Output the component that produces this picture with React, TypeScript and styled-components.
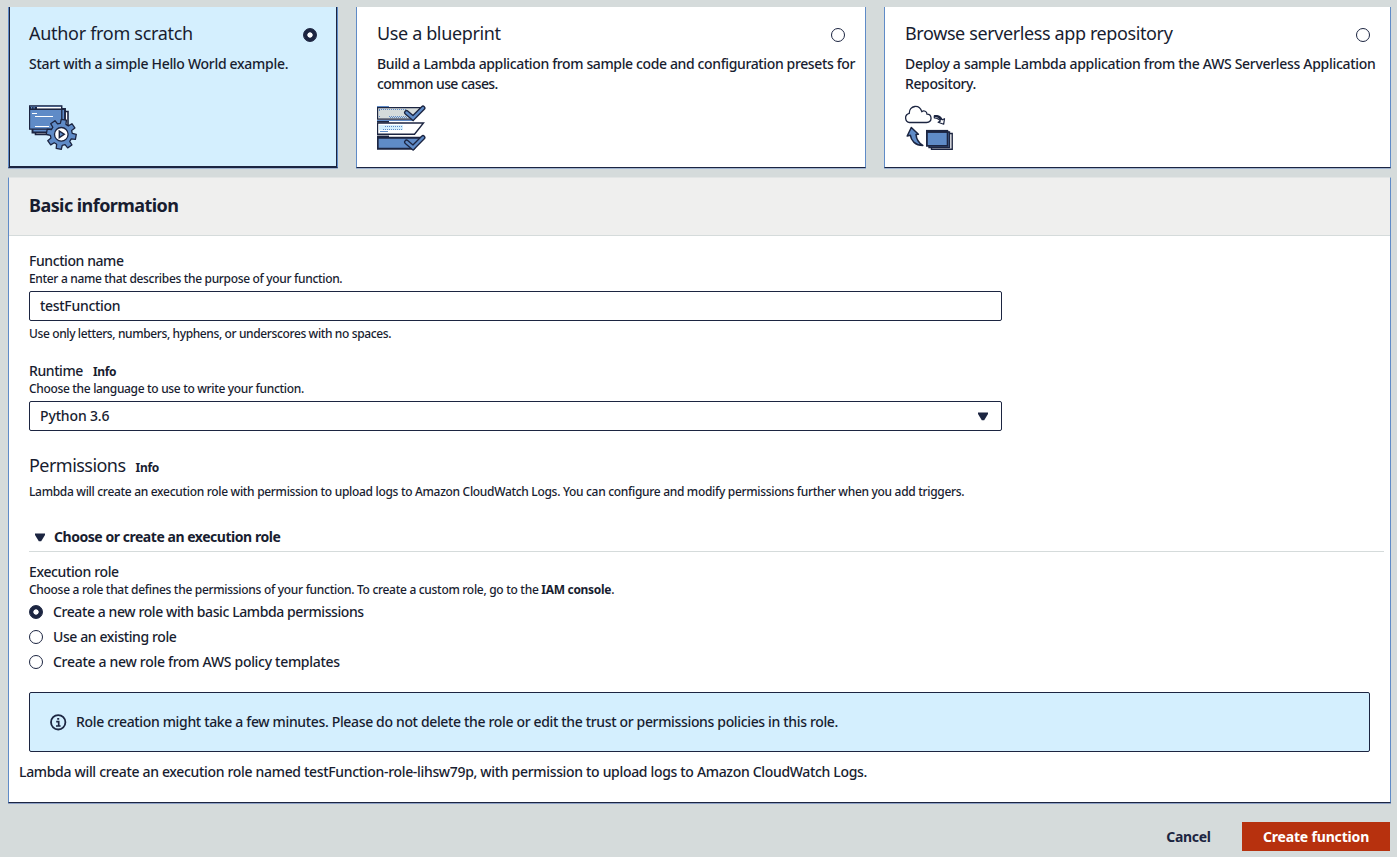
import React from "react";
import styled, { createGlobalStyle, css } from "styled-components";

const ink = "#1c2541";
const blue = "#5f8bc7";
const ice = "#d4effe";
const page = "#d5dbdb";

const GlobalStyle = createGlobalStyle`
  *, *::before, *::after { box-sizing: border-box; }
  body {
    margin: 0;
    background: ${page};
    color: #181d30;
    font-family: "Noto Sans", "Open Sans", sans-serif;
    font-size: 14px;
    line-height: 20px;
  }
  #root { height: 857px; overflow: hidden; }
`;

type TextProps = { $ls?: number };
const tracking = css<TextProps>`
  letter-spacing: ${(p) => p.$ls ?? -0.3}px;
  white-space: nowrap;
`;

const Page = styled.main`
  padding: 7px 6px 0 8px;
  height: 857px;
`;

const Cards = styled.section`
  display: grid;
  grid-template-columns: 330px 510px 507px;
  column-gap: 18px;
  height: 161px;
`;

const Card = styled.label<{ $selected?: boolean }>`
  display: flex;
  flex-direction: column;
  padding: 15px 20px 0;
  background: ${(p) => (p.$selected ? ice : "#fff")};
  border: 1px solid ${blue};
  border-top: 0;
  border-bottom-color: ${ink};
  box-shadow: ${(p) =>
    p.$selected
      ? `inset 1px 0 ${ink}, inset -1px 0 ${ink}, inset 0 -1px ${ink}, 0 1px #9fb2cf`
      : "0 1px #9fb2cf"};
`;

const CardHead = styled.div`
  display: flex;
  justify-content: space-between;
  align-items: flex-start;
  height: 22px;
`;

const CardTitle = styled.span<TextProps>`
  ${tracking}
  font-size: 18px;
  line-height: 22px;
`;

const CardText = styled.div`
  height: 40px;
  margin: 10px 0 11px;
`;

const Line = styled.span<TextProps>`
  ${tracking}
  display: block;
  font-weight: 500;
`;

const Radio = styled.span<{ $on?: boolean }>`
  flex: none;
  width: 14px;
  height: 14px;
  border-radius: 50%;
  border: 1px solid ${ink};
  background: ${(p) => (p.$on ? `radial-gradient(circle, #fff 2.3px, ${ink} 3px)` : "#fff")};
`;

const CardRadio = styled(Radio)`
  margin-top: 6px;
`;

const Panel = styled.section`
  margin-top: 9px;
  height: 626px;
  background: #fff;
  border: 1px solid ${blue};
  border-top-color: #e2e5e5;
  border-bottom-color: ${ink};
  box-shadow: 0 1px #8c9fc4;
`;

const PanelHead = styled.header`
  display: flex;
  align-items: center;
  height: 58px;
  padding: 0 0 3px 20px;
  background: #efefee;
  border-bottom: 1px solid ${page};
`;

const PanelTitle = styled.h2<TextProps>`
  ${tracking}
  margin: 0;
  font-size: 18px;
  line-height: 24px;
  font-weight: 700;
`;

const Body = styled.div`
  display: flex;
  flex-direction: column;
  padding: 16px 20px 0;
`;

const Field = styled.div`
  width: 973px;
  margin-bottom: 19px;
`;

const LabelRow = styled.div<{ $tall?: boolean }>`
  display: flex;
  align-items: baseline;
  gap: 10px;
  height: ${(p) => (p.$tall ? 23 : 18)}px;
  line-height: ${(p) => (p.$tall ? 22 : 18)}px;
`;

const Label = styled.span<TextProps>`
  ${tracking}
  font-weight: 500;
`;

const Heading = styled.span<TextProps>`
  ${tracking}
  font-size: 18px;
`;

const Info = styled.a<TextProps>`
  ${tracking}
  font-size: 12px;
  font-weight: 700;
`;

const Hint = styled.div<TextProps>`
  ${tracking}
  font-size: 12px;
  line-height: 18px;
  font-weight: 500;
`;

const Control = styled.div<TextProps>`
  ${tracking}
  display: flex;
  align-items: center;
  justify-content: space-between;
  height: 30px;
  margin: 3px 0 4px;
  padding: 0 12px 0 10px;
  font-weight: 500;
  border: 1px solid ${ink};
  border-radius: 2px;
`;

const Permissions = styled.div`
  margin-bottom: 26px;
  ${Hint} { margin-top: 6px; }
`;

const Expander = styled.div`
  display: flex;
  align-items: center;
  gap: 8px;
  height: 25px;
  margin: 0 -14px 11px 0;
  padding: 0 0 4px 5px;
  border-bottom: 1px solid ${page};
`;

const ExpanderTitle = styled.span<TextProps>`
  ${tracking}
  font-weight: 700;
`;

const Option = styled.label`
  display: flex;
  align-items: center;
  gap: 10px;
  height: 25px;
`;

const Alert = styled.div`
  display: flex;
  align-items: center;
  gap: 9px;
  height: 60px;
  margin: 18px 0 10px;
  padding-left: 20px;
  background: ${ice};
  border: 1px solid ${ink};
  border-radius: 2px;
`;

const Outcome = styled.div`
  margin-left: -10px;
`;

const Footer = styled.footer`
  display: flex;
  justify-content: flex-end;
  align-items: center;
  margin-top: 19px;
  padding-right: 1px;
`;

const Button = styled.button<{ $primary?: boolean } & TextProps>`
  width: ${(p) => (p.$primary ? 148 : 107)}px;
  height: 29px;
  padding: 0;
  border: 0;
  font: 700 14px/20px "Noto Sans", sans-serif;
  color: ${(p) => (p.$primary ? "#fff" : ink)};
  background: ${(p) => (p.$primary ? "#b7310e" : "transparent")};
  ${tracking}
`;

const Caret = () => (
  <svg width="12" height="9" viewBox="0 0 12 9">
    <path d="M1 .5h10v1.5L7.2 8.2H4.8L1 2z" fill={ink} />
  </svg>
);

const InfoIcon = () => (
  <svg width="17" height="17" viewBox="0 0 17 17" fill="none" stroke={ink}>
    <circle cx="8.2" cy="8.3" r="7.2" strokeWidth="1.8" />
    <path d="M7.2 4.8h2M6.2 7.6h2.500v4M6 12h4.600" strokeWidth="1.7" />
  </svg>
);

const teeth = 8;
const gearPath =
  Array.from({ length: teeth }, (_, i) => {
    const base = ((i * 360) / teeth - 80) * (Math.PI / 180);
    const at = (r: number, deg: number) => {
      const a = base + (deg * Math.PI) / 180;
      return `${(32.3 + r * Math.cos(a)).toFixed(2)} ${(29.3 + r * Math.sin(a)).toFixed(2)}`;
    };
    return `${i ? "L" : "M"}${at(11, -15)}L${at(15, -10)}L${at(15, 10)}L${at(11, 15)}`;
  }).join("") + "Z";

const ScratchIcon = () => (
  <svg width="49" height="47" viewBox="0 0 49 47" fill="none" stroke={ink}>
    <path d="M6.5 6.5h32.500v23h-32.500z" fill="#fff" strokeWidth="1.6" />
    <path d="M3.500 4h32.500v23.500h-32.500z" fill={blue} strokeWidth="1.900" />
    <path d="M.5.8h32.300v23.400H.5z" fill={blue} strokeWidth="1.300" />
    <path d="M.5 3.500h32.300" strokeWidth="2.800" />
    <path d="M8 2.700h24" stroke="#fff" strokeWidth="1.500" />
    <path d="M2 2.800h1.200M4.500 2.800h1.200" stroke={blue} strokeWidth="1.400" />
    <path d="M3 8.500h5M6 11.500h18M6 21.500h14" stroke="#fff" />
    <path d={gearPath} fill={blue} strokeWidth="1.300" strokeLinejoin="round" />
    <circle cx="32.300" cy="29.300" r="6.800" fill="#fff" strokeWidth="1.300" />
    <path d="M30.300 26v6.600l5-3.300z" fill={blue} strokeWidth="1.400" />
  </svg>
);

const Tick = ({ y }: { y: number }) => (
  <g transform={`translate(0 ${y})`} fill="none">
    <path d="M29.500 7.500l6.500 5.500L46 3" stroke={ink} strokeWidth="5" strokeLinecap="round" />
    <path d="M29.500 7.500l6.500 5.500L46 3" stroke={blue} strokeWidth="2.400" strokeLinecap="round" />
  </g>
);

const BlueprintIcon = () => (
  <svg width="49" height="47" viewBox="0 0 49 47" fill="none" stroke={ink}>
    <path d="M.5 2.700h43L36 14.200H.5z" fill={page} strokeWidth="1.300" />
    <path d="M2 4.500h27M12 11.500h17M13 12.500h17M2 5.500h2M2 11.500h2" stroke={blue} strokeDasharray="1 1" />
    <path d="M0 1.500h12" stroke={blue} />
    <path d="M0 2.500h12" />
    <path d="M0 15.500h37" stroke={blue} />
    <path d="M.5 18h46l-9 11.300H.5z" fill="#fff" strokeWidth="1.400" />
    <path d="M0 16.800h12" strokeWidth="1.600" />
    <path d="M2 22.500h24" stroke={ice} strokeWidth="5" />
    <path d="M8 21.500h18M6 24.500h20" stroke={blue} strokeDasharray="1 1" />
    <path d="M3 26.500h8" stroke={blue} />
    <path d="M.7 32.700H45L37 43.800H.7z" fill={blue} strokeWidth="1.900" />
    <path d="M0 31.300h12" strokeWidth="1.500" />
    <Tick y={0} />
    <Tick y={29.500} />
  </svg>
);

const RepositoryIcon = () => (
  <svg width="49" height="47" viewBox="0 0 49 47" fill="none" stroke={ink}>
    <path
      d="M4.500 17.500h17c3-.3 4.700-2.300 4.500-4.700-.2-2.300-1.900-3.700-4-3.700-.2-2.800-3-3.900-5.200-2.500C15.700 3 13 1.200 9.800 1.500 6.500 2 4.200 4.800 4.300 8.300 1.800 9 .5 10.800.6 13c.2 2.600 1.700 4.300 3.900 4.500z"
      fill="#fff"
      strokeWidth="1.300"
    />
    <path d="M29.300 10.800c4-.6 6.500 1 7.900 4l2.300-1.100-.8 5.500-5.600-2 2.200-1.100c-.9-1.900-2.300-2.900-6-3.300z" fill="#fff" strokeWidth="1.200" strokeLinejoin="round" />
    <path d="M29.300 11c3.500-.1 5.500 1.500 6.800 4" strokeWidth="2.200" />
    <path d="M6.300 22.500L2.200 31l3.100-.8c.8 5.500 5 10.200 12.500 10.300-4.300-2.600-6.400-6-6.800-11.100l2.400-.1z" fill={blue} strokeWidth="1.500" strokeLinejoin="round" />
    <path d="M26.500 28.500h20.700v15.700H26.500z" fill="#fff" strokeWidth="1.400" />
    <path d="M24 27h20.500v15.500H24z" fill={blue} strokeWidth="1.400" />
    <path d="M21.900 26.300h20.700v14.600H21.900z" fill={blue} strokeWidth="1.800" />
    <path d="M21 26.400h22" strokeWidth="3" />
  </svg>
);

export default function App() {
  return (
    <>
      <GlobalStyle />
      <Page>
        <Cards>
          <Card $selected>
            <CardHead>
              <CardTitle>Author from scratch</CardTitle>
              <CardRadio $on />
            </CardHead>
            <CardText>
              <Line>Start with a simple Hello World example.</Line>
            </CardText>
            <ScratchIcon />
          </Card>
          <Card>
            <CardHead>
              <CardTitle $ls={-0.37}>Use a blueprint</CardTitle>
              <CardRadio />
            </CardHead>
            <CardText>
              <Line $ls={-0.37}>Build a Lambda application from sample code and configuration presets for</Line>
              <Line $ls={-0.57}>common use cases.</Line>
            </CardText>
            <BlueprintIcon />
          </Card>
          <Card>
            <CardHead>
              <CardTitle $ls={-0.39}>Browse serverless app repository</CardTitle>
              <CardRadio />
            </CardHead>
            <CardText>
              <Line $ls={-0.31}>Deploy a sample Lambda application from the AWS Serverless Application</Line>
              <Line $ls={-0.38}>Repository.</Line>
            </CardText>
            <RepositoryIcon />
          </Card>
        </Cards>

        <Panel>
          <PanelHead>
            <PanelTitle $ls={-0.56}>Basic information</PanelTitle>
          </PanelHead>
          <Body>
            <Field>
              <LabelRow><Label $ls={-0.42}>Function name</Label></LabelRow>
              <Hint $ls={-0.33}>Enter a name that describes the purpose of your function.</Hint>
              <Control>testFunction</Control>
              <Hint $ls={-0.38}>Use only letters, numbers, hyphens, or underscores with no spaces.</Hint>
            </Field>
            <Field>
              <LabelRow><Label $ls={-0.42}>Runtime</Label><Info>Info</Info></LabelRow>
              <Hint $ls={-0.33}>Choose the language to use to write your function.</Hint>
              <Control $ls={-0.15}>Python 3.6<Caret /></Control>
            </Field>
            <Permissions>
              <LabelRow $tall><Heading $ls={-0.54}>Permissions</Heading><Info>Info</Info></LabelRow>
              <Hint $ls={-0.312}>Lambda will create an execution role with permission to upload logs to Amazon CloudWatch Logs. You can configure and modify permissions further when you add triggers.</Hint>
            </Permissions>
            <Expander>
              <Caret />
              <ExpanderTitle $ls={-0.46}>Choose or create an execution role</ExpanderTitle>
            </Expander>
            <LabelRow><Label $ls={-0.37}>Execution role</Label></LabelRow>
            <Hint>Choose a role that defines the permissions of your function. To create a custom role, go to the <b>IAM console</b>.</Hint>
            <Option><Radio $on /><Line $ls={-0.41}>Create a new role with basic Lambda permissions</Line></Option>
            <Option><Radio /><Line $ls={-0.4}>Use an existing role</Line></Option>
            <Option><Radio /><Line>Create a new role from AWS policy templates</Line></Option>
            <Alert>
              <InfoIcon />
              <Line $ls={-0.345}>Role creation might take a few minutes. Please do not delete the role or edit the trust or permissions policies in this role.</Line>
            </Alert>
            <Outcome>
              <Line $ls={-0.325}>Lambda will create an execution role named testFunction-role-lihsw79p, with permission to upload logs to Amazon CloudWatch Logs.</Line>
            </Outcome>
          </Body>
        </Panel>

        <Footer>
          <Button>Cancel</Button>
          <Button $primary $ls={-0.17}>Create function</Button>
        </Footer>
      </Page>
    </>
  );
}
